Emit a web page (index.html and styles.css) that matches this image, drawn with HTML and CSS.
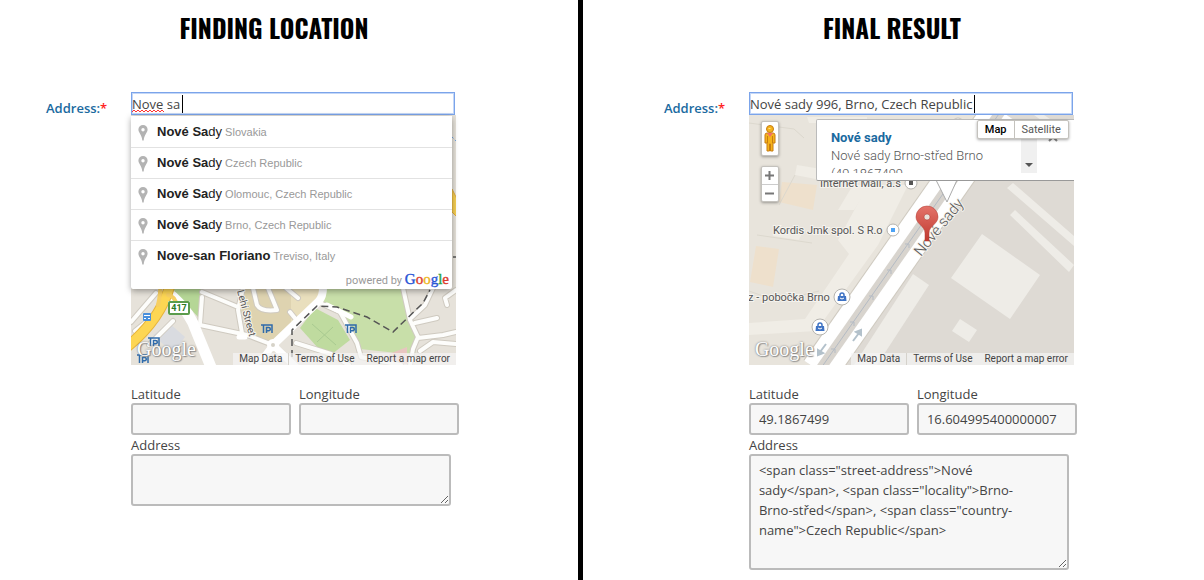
FILE: index.html
```html
<!DOCTYPE html>
<html lang="en">
<head>
    <meta charset="UTF-8">
    <meta name="viewport" content="width=device-width, initial-scale=1.0">
    <title>Address field with map</title>
    <link rel="stylesheet" href="styles.css">
</head>
<body>
    <main class="compare">
        <section class="panel panel-finding">
            <h1>Finding location</h1>
            <div class="form-row">
                <label class="row-label" for="search-a">Address:<span class="required">*</span></label>
                <div class="fields">
                    <div class="search-box">
                        <input class="search" type="text" id="search-a" value="Nove sa" autocomplete="off">
                        <svg class="spell-mark" width="32" height="3" viewBox="0 0 32 3"><path d="M0 2l2-2 2 2 2-2 2 2 2-2 2 2 2-2 2 2 2-2 2 2 2-2 2 2 2-2 2 2 2-2 2 2" fill="none" stroke="#f33"/></svg>
                        <span class="caret caret-typing"></span>
                        <div class="suggestions">
                            <ul>
                                <li><svg class="pin" viewBox="0 0 10 16"><use href="#pin"/></svg><span class="place"><b>Nové Sa</b>dy</span> <span class="region">Slovakia</span></li>
                                <li><svg class="pin" viewBox="0 0 10 16"><use href="#pin"/></svg><span class="place"><b>Nové Sa</b>dy</span> <span class="region">Czech Republic</span></li>
                                <li><svg class="pin" viewBox="0 0 10 16"><use href="#pin"/></svg><span class="place"><b>Nové Sa</b>dy</span> <span class="region">Olomouc, Czech Republic</span></li>
                                <li><svg class="pin" viewBox="0 0 10 16"><use href="#pin"/></svg><span class="place"><b>Nové Sa</b>dy</span> <span class="region">Brno, Czech Republic</span></li>
                                <li><svg class="pin" viewBox="0 0 10 16"><use href="#pin"/></svg><span class="place"><b>Nove-san Floriano</b></span> <span class="region">Treviso, Italy</span></li>
                            </ul>
                            <div class="powered">powered by <span class="brand"><i class="blue">G</i><i class="red">o</i><i class="yellow">o</i><i class="blue">g</i><i class="green">l</i><i class="red">e</i></span></div>
                        </div>
                    </div>

                    <div class="map">
                        <svg class="tiles" viewBox="0 0 325 250" preserveAspectRatio="xMidYMid slice">
                            <defs>
                                <path id="pin" fill="#b3b3b3" fill-rule="evenodd" d="M5 0a4.600 4.600 0 0 0-4.600 4.600C.4 8 3.800 9.500 4.300 15.500h1.400C6.200 9.500 9.600 8 9.600 4.600A4.600 4.600 0 0 0 5 0zm0 3a1.700 1.700 0 1 1 0 3.400A1.700 1.700 0 0 1 5 3z"/>
                                <g id="parking" fill="none" stroke="#2f6bab" stroke-width="1.500">
                                    <path d="M0 1h11v8M2.500 1v8M5.500 9V3.500h2.200a1.600 1.600 0 0 1 0 3.200H5.500"/>
                                </g>
                            </defs>
                            <rect width="325" height="250" fill="#e6e2da"/>
                            <path fill="#ded3b0" d="M112 173h80l-3 12-46 44-27-11-7-24z"/>
                            <path fill="#e9dfbd" d="M160 173h31l-3 12-28 27z"/>
                            <path fill="#d9dbe0" d="M22 220l16-12 16 14-12 16z"/>
                            <path fill="#b5d696" d="M42 173h28v18l-3 11-23-25z"/>
                            <path fill="#c8dfa9" d="M194 173h78l4 25 10 24-2 18-55-6-20-37-20-10z"/>
                            <path fill="#bfdb9f" d="M184 193l23 12 12 20-23 18-27-30z"/>
                            <path fill="#e8c5c0" d="M258 239l18-7v17h-20z"/>
                            <g fill="none" stroke="#cfcac0" stroke-width="6" stroke-linecap="round" stroke-linejoin="round">
                                <path d="M112 173l-5 22 4 23M71 177l36 15M71 182l-2 27M69 210l47 10 26 10M122 173l4 17q4 7 20 5l-9-22M155 173l12 10"/>
                                <path d="M189 188l20 9 17 31 4 14 40 8M272 173l7 32 8 17-5 12-3 16M287 223l25-3 13-3M284 208l22-5M302 173l-8 17-15 14M316 190l-2-7 11-8M289 236l13-9 23 2M0 207l25-29M4 216l10-8M18 230l24-24M159 197l8 10M165 228l35 11 18 11"/>
                            </g>
                            <g fill="none" stroke="#fdfdfb" stroke-width="4" stroke-linecap="round" stroke-linejoin="round">
                                <path d="M112 173l-5 22 4 23M71 177l36 15M71 182l-2 27M69 210l47 10 26 10M122 173l4 17q4 7 20 5l-9-22M155 173l12 10"/>
                                <path d="M189 188l20 9 17 31 4 14 40 8M272 173l7 32 8 17-5 12-3 16M287 223l25-3 13-3M284 208l22-5M302 173l-8 17-15 14M316 190l-2-7 11-8M289 236l13-9 23 2M0 207l25-29M4 216l10-8M18 230l24-24M159 197l8 10M165 228l35 11 18 11"/>
                            </g>
                            <g fill="none" stroke="#fff" stroke-linecap="round">
                                <path stroke-width="8" d="M192 173q0 8-4 13l-45 43"/>
                                <path stroke-width="7" d="M142 230l23 22M142 230l-9 12-12 9"/>
                                <path stroke-width="11" d="M42 182q17 15 24 36l14 34"/>
                                <path stroke-width="5" d="M196 190l24 12M108 222h6"/>
                            </g>
                            <circle cx="142" cy="230" r="6" fill="#fff"/>
                            <circle cx="142" cy="230" r="2" fill="#d6d2c8"/>
                            <g fill="none" stroke-linecap="round">
                                <path stroke="#e6b43c" stroke-width="11" d="M-4 232q34-28 43-62"/>
                                <path stroke="#fdd653" stroke-width="9" d="M-4 232q34-28 43-62"/>
                                <path stroke="#f7cf62" stroke-width="4" d="M27 190q3-13 2-20M37 180q8 2 8 10"/>
                            </g>
                            <path fill="#f6cf53" stroke="#dfab3b" d="M321 74l6 12v17l-6-6z"/>
                            <path fill="none" stroke="#6fa1dd" stroke-dasharray="2 2" d="M321 22l4 4"/>
                            <path fill="none" stroke="#555" stroke-width="1.500" stroke-dasharray="7 4" d="M161 242v-27l25-24 20 1 30 10 26 15 30-29 7-13M322 142h3"/>
                            <path fill="none" stroke="#a9ca91" d="M181 209l24 21M186 227l16-15"/>
                            <rect x="37" y="186" width="22" height="14" rx="1" fill="#fff"/>
                            <rect x="38" y="187" width="20" height="12" rx="1" fill="#fff" stroke="#5b9c4c" stroke-width="2"/>
                            <text class="shield" x="48" y="196" text-anchor="middle">417</text>
                            <rect x="12" y="198" width="8" height="8" rx="1" fill="#4a90dc"/>
                            <path stroke="#fff" d="M13 200.500h6M13 203.500h2M17 203.500h2"/>
                            <use href="#parking" x="130" y="209"/>
                            <use href="#parking" x="214" y="209"/>
                            <use href="#parking" x="17" y="222"/>
                            <use href="#parking" x="6" y="239"/>
                            <text class="street" transform="translate(106 176) rotate(75)">Lehi Street</text>
                        </svg>
                        <span class="watermark">Google</span>
                        <div class="credits"><a href="#">Map Data</a><a href="#">Terms of Use</a><a href="#">Report a map error</a></div>
                    </div>

                    <div class="coords">
                        <div class="field">
                            <label for="lat-a">Latitude</label>
                            <input type="text" id="lat-a">
                        </div>
                        <div class="field">
                            <label for="lng-a">Longitude</label>
                            <input type="text" id="lng-a">
                        </div>
                    </div>
                    <div class="field">
                        <label for="adr-a">Address</label>
                        <textarea id="adr-a" rows="2"></textarea>
                    </div>
                </div>
            </div>
        </section>

        <section class="panel panel-result">
            <h1>Final result</h1>
            <div class="form-row">
                <label class="row-label" for="search-b">Address:<span class="required">*</span></label>
                <div class="fields">
                    <div class="search-box">
                        <input class="search" type="text" id="search-b" value="Nové sady 996, Brno, Czech Republic" autocomplete="off">
                        <span class="caret caret-done"></span>
                    </div>

                    <div class="map">
                        <svg class="tiles" viewBox="0 0 325 250" preserveAspectRatio="xMidYMid slice">
                            <defs>
                                <linearGradient id="marker-red" x1="0" y1="0" x2="0" y2="1">
                                    <stop offset="0" stop-color="#e4736a"/>
                                    <stop offset="1" stop-color="#c0392f"/>
                                </linearGradient>
                                <g id="bag">
                                    <circle r="8" fill="#fff" stroke="#b5b3ae"/>
                                    <path fill="none" stroke="#3f73c4" stroke-width="1.500" d="M-2-1v-1a2 2 0 0 1 4 0v1"/>
                                    <path fill="#3f73c4" d="M-4-1h8l.5 5h-9z"/>
                                    <path fill="none" stroke="#fff" d="M-2 1q2 2 4 0"/>
                                </g>
                            </defs>
                            <rect width="325" height="250" fill="#e8e4dc"/>
                            <path fill="#dedad4" d="M250 0h75v250H90z"/>
                            <g fill="#f0ede6">
                                <path d="M0 208l56-4 44-65-11-14 30-55h40l-30 60-62 86-67 4z"/>
                                <path d="M48 50l24 4v11l-26-5zM25 115l28 3-3 7-26-4zM58 2h60v6H60zM104 70h18l-17 25h-16z"/>
                            </g>
                            <g fill="#eee0cc">
                                <path d="M7 131l23 3-6 38-23-5zM33 67l35 3-4 25-34-8z"/>
                            </g>
                            <path fill="none" stroke="#dcd8ce" d="M0 8l45 6 10 9M8 120l55 8M0 176l28 10 42-10M46 60l-16 30"/>
                            <g fill="#eeece7">
                                <path d="M233 119l58 41-30 44-59-41zM211 204l17 11-8 12-17-11z"/>
                                <path d="M164 159l16 11-52 80h-23z"/>
                                <path d="M258 73l6-5 61 53v10zM261 100l5-5 59 55-5 7zM285 0h10l30 20v9z"/>
                            </g>
                            <g fill="none">
                                <path stroke="#cfcac0" stroke-width="38" d="M70 256L252-4"/>
                                <path stroke="#fff" stroke-width="36" d="M70 256L252-4"/>
                                <path stroke="#d8d4ce" stroke-width="10" d="M70 256L252-4"/>
                                <path stroke="#b4bbc4" stroke-width="1" d="M70 256L252-4"/>
                                <path stroke="#b4bbc4" d="M82 234l4 0 0 4M101 207l4 0 0 4M120 181l4 0 0 4M138 155l4 0 0 4M156 129l4 0 0 4"/>
                            </g>
                            <g stroke="#b3c1cb" stroke-width="2" fill="#b3c1cb">
                                <path d="M104 226l6-8M107 217l5-2v5zM77 229l-6 8M74 238l-5 2v-5z"/>
                            </g>
                            <circle cx="209" cy="9" r="6" fill="#fff" stroke="#c5c1ba"/>
                            <text class="poi" x="24" y="119">Kordis Jmk spol. S R.o</text>
                            <circle cx="144" cy="115" r="6" fill="#fff" stroke="#b5b3ae"/>
                            <rect x="142" y="113" width="4" height="4" fill="#4da3f5"/>
                            <text class="poi" x="71" y="72">Internet Mall, a.s</text>
                            <circle cx="162" cy="68" r="6" fill="#fff" stroke="#b5b3ae"/>
                            <rect x="160" y="66" width="4" height="4" fill="#555"/>
                            <text class="poi" x="-1" y="186">z - pobočka Brno</text>
                            <use href="#bag" x="93" y="182"/>
                            <use href="#bag" x="71" y="212"/>
                            <text class="road-name" transform="translate(172 142) rotate(-51)">Nové sady</text>
                            <path fill="#fff" stroke="#aaa" d="M187 65l11 22 10-22"/>
                            <path fill="url(#marker-red)" stroke="#b03a32" stroke-width=".5" d="M178 91a11 11 0 0 0-11 11c0 7 9 9 9 16v8h4v-8c0-7 9-9 9-16a11 11 0 0 0-11-11z"/>
                            <circle cx="178" cy="102" r="3" fill="#e9e2dc" stroke="#a8342c" stroke-width=".5"/>
                        </svg>

                        <div class="street-view">
                            <svg width="14" height="30" viewBox="0 0 14 30">
                                <g fill="#f5b31b" stroke="#c77d12">
                                    <path d="M2 11q0-2 2-2h6q2 0 2 2v8h-2v8H7.500v-7h-1v7H4v-8H2z"/>
                                    <circle cx="7" cy="5" r="3.500"/>
                                </g>
                                <path fill="#f1706a" d="M4 9h6l-3 4z"/>
                                <path stroke="#c77d12" d="M4.500 12v7M9.500 12v7"/>
                                <path stroke="#fde08a" d="M5.500 4.500h2"/>
                            </svg>
                        </div>
                        <div class="zoom">
                            <button type="button" aria-label="Zoom in"><svg width="9" height="9" viewBox="0 0 9 9"><path d="M0 4.500h9M4.500 0v9"/></svg></button>
                            <button type="button" aria-label="Zoom out"><svg width="9" height="9" viewBox="0 0 9 9"><path d="M0 4.500h9"/></svg></button>
                        </div>

                        <div class="info">
                            <div class="info-body">
                                <strong>Nové sady</strong>
                                <p>Nové sady Brno-střed Brno (49.1867499</p>
                            </div>
                            <div class="info-scroll"><svg width="8" height="4" viewBox="0 0 8 4"><path d="M0 0h8L4 4z" fill="#555"/></svg></div>
                            <svg class="info-close" width="10" height="10" viewBox="0 0 10 10"><path d="M1 9l4-4 4 4M1 1l4 4 4-4" fill="none" stroke="#888" stroke-width="2"/></svg>
                        </div>
                        <div class="map-type">
                            <button type="button" class="active">Map</button>
                            <button type="button">Satellite</button>
                        </div>
                        <span class="watermark">Google</span>
                        <div class="credits"><a href="#">Map Data</a><a href="#">Terms of Use</a><a href="#">Report a map error</a></div>
                    </div>

                    <div class="coords">
                        <div class="field">
                            <label for="lat-b">Latitude</label>
                            <input type="text" id="lat-b" value="49.1867499">
                        </div>
                        <div class="field">
                            <label for="lng-b">Longitude</label>
                            <input type="text" id="lng-b" value="16.604995400000007">
                        </div>
                    </div>
                    <div class="field">
                        <label for="adr-b">Address</label>
                        <textarea id="adr-b" class="filled" rows="5">&lt;span class="street-address"&gt;Nové sady&lt;/span&gt;, &lt;span class="locality"&gt;Brno-Brno-střed&lt;/span&gt;, &lt;span class="country-name"&gt;Czech Republic&lt;/span&gt;</textarea>
                    </div>
                </div>
            </div>
        </section>
    </main>
</body>
</html>
```

FILE: styles.css
```css
* {
    box-sizing: border-box;
}

body {
    margin: 0;
    background: #fff;
    color: #444;
    font: 13px/20px "Open Sans", "Noto Sans", sans-serif;
}

.compare {
    display: flex;
    min-height: 100vh;
}

.panel {
    width: 48%;
    padding: 8px 16px 8px 46px;
}

.panel-result {
    width: 52%;
    padding-left: 81px;
    border-left: 5px solid #000;
}

h1 {
    max-width: 456px;
    margin: 0 0 44px;
    color: #000;
    font: bold 25px/40px Oswald, "Roboto Condensed", "Liberation Sans Narrow", sans-serif;
    text-align: center;
    text-transform: uppercase;
}

.form-row {
    display: flex;
}

.row-label {
    flex: 0 0 85px;
    padding-top: 6px;
    color: #1a6a9f;
    font-weight: 600;
}

.required {
    color: #f22;
}

.fields {
    flex: 1;
    max-width: 328px;
}

/* search input */
.search-box {
    position: relative;
    max-width: 324px;
}

.search {
    display: block;
    width: 100%;
    height: 23px;
    padding: 0;
    border: 1px solid #7ba4ea;
    outline: 0;
    box-shadow: inset 0 0 0 1px #c4d7f7;
    color: #444;
    font: inherit;
}

.caret {
    position: absolute;
    top: 3px;
    width: 1px;
    height: 18px;
    background: #000;
}

.caret-typing {
    left: 51px;
}

.caret-done {
    left: 225px;
}

.spell-mark {
    position: absolute;
    top: 18px;
    left: 1px;
}

/* suggestions */
.suggestions {
    position: absolute;
    z-index: 2;
    top: 24px;
    left: 0;
    right: 3px;
    padding-top: 1px;
    background: #fff;
    border-radius: 0 0 2px 2px;
    box-shadow: 0 2px 6px rgba(0,0,0,0.35);
    font: 11px/30px "Liberation Sans", Arial, sans-serif;
}

.suggestions ul {
    margin: 0;
    padding: 0;
    list-style: none;
}

.suggestions li {
    height: 31px;
    padding-left: 7px;
    border-bottom: 1px solid #e2e2e2;
    white-space: nowrap;
}

.suggestions li:last-child {
    height: 30px;
    border-bottom: 0;
}

.pin {
    width: 10px;
    height: 16px;
    margin-right: 9px;
    vertical-align: middle;
}

.place {
    color: #222;
    font-size: 13px;
}

.region {
    color: #999;
}

.powered {
    height: 18px;
    padding-right: 3px;
    color: #999;
    font: 11px/16px Roboto, sans-serif;
    text-align: right;
}

.brand {
    font: 15px/16px "Liberation Serif", serif;
}

.brand i {
    font-style: normal;
    -webkit-text-stroke: 0.4px;
}

.blue { color: #2a56d6; }
.red { color: #dc3a2c; }
.yellow { color: #edb51c; }
.green { color: #2ea144; }

/* map */
.map {
    position: relative;
    max-width: 325px;
    height: 250px;
    margin-bottom: 20px;
    overflow: hidden;
    font-family: Roboto, sans-serif;
}

.tiles {
    display: block;
    width: 100%;
    height: 100%;
}

.tiles text {
    fill: #555;
    stroke: #f5f3ee;
    stroke-width: 2px;
    paint-order: stroke;
    font-size: 11px;
}

.tiles .shield {
    fill: #2d7a24;
    stroke: none;
    font-size: 9px;
    font-weight: bold;
}

.tiles .street {
    font-size: 10px;
}

.tiles .road-name {
    font-size: 15px;
    font-weight: 300;
}

.watermark {
    position: absolute;
    left: 6px;
    bottom: 5px;
    color: #fff;
    font: 20px/22px "Liberation Serif", serif;
    text-shadow: 0 0 2px #666, 1px 1px 1px #999;
}

.credits {
    position: absolute;
    right: 0;
    bottom: 0;
    display: flex;
    background: rgba(245,245,245,0.7);
    font-size: 10px;
    line-height: 12px;
}

.credits a {
    padding: 0 6px;
    color: #444;
    text-decoration: none;
}

.credits a:nth-child(2) {
    border-left: 1px solid #d5d2cb;
}

/* map controls */
.street-view,
.zoom,
.map-type {
    position: absolute;
    background: #fff;
    border: 1px solid #c4c2bd;
    border-radius: 2px;
    box-shadow: 0 1px 3px rgba(0,0,0,0.35);
}

.street-view {
    top: 6px;
    left: 12px;
    display: flex;
    align-items: center;
    justify-content: center;
    width: 18px;
    height: 35px;
}

.zoom {
    top: 51px;
    left: 12px;
    width: 18px;
}

.zoom button {
    display: flex;
    align-items: center;
    justify-content: center;
    width: 100%;
    height: 17px;
    padding: 0;
    background: none;
    border: 0;
}

.zoom button + button {
    border-top: 1px solid #ccc;
}

.zoom path {
    stroke: #777;
    stroke-width: 2px;
}

.map-type {
    top: 5px;
    right: 5px;
    display: flex;
}

.map-type button {
    padding: 0 7px;
    background: none;
    border: 0;
    color: #565656;
    font: 11px/17px Roboto, sans-serif;
}

.map-type button + button {
    border-left: 1px solid #c4c2bd;
}

.map-type .active {
    color: #000;
    font-weight: 500;
}

/* info window */
.info {
    position: absolute;
    top: 4px;
    left: 67px;
    right: -2px;
    display: flex;
    height: 62px;
    padding: 9px 14px 7px;
    background: #fff;
    border: 1px solid #bbb;
    border-bottom-color: #999;
    border-radius: 2px;
    font-size: 13px;
    line-height: 18px;
}

.info-body {
    flex: 0 0 190px;
    overflow: hidden;
}

.info strong {
    color: #1a6a9f;
}

.info p {
    width: 160px;
    margin: 0;
    color: #555;
    font-weight: 300;
}

.info-scroll {
    display: flex;
    align-items: flex-end;
    justify-content: center;
    width: 16px;
    padding-bottom: 6px;
    background: #f0f0f0;
}

.info-close {
    margin: 3px 0 0 11px;
}

/* result fields */
.coords {
    display: flex;
    gap: 8px;
}

.field {
    flex: 1;
    color: #444;
}

.field label {
    display: block;
    line-height: 18px;
}

.field input,
.field textarea {
    display: block;
    width: 100%;
    padding: 3px 8px;
    background: #f7f7f7;
    border: 2px solid #bbb;
    border-radius: 3px;
    color: #444;
    font: inherit;
}

.field input {
    height: 32px;
    margin-bottom: 1px;
}

.field textarea {
    max-width: 320px;
    height: 52px;
    overflow: hidden;
    padding: 4px 26px 4px 8px;
}

.field .filled {
    height: 116px;
}
```
